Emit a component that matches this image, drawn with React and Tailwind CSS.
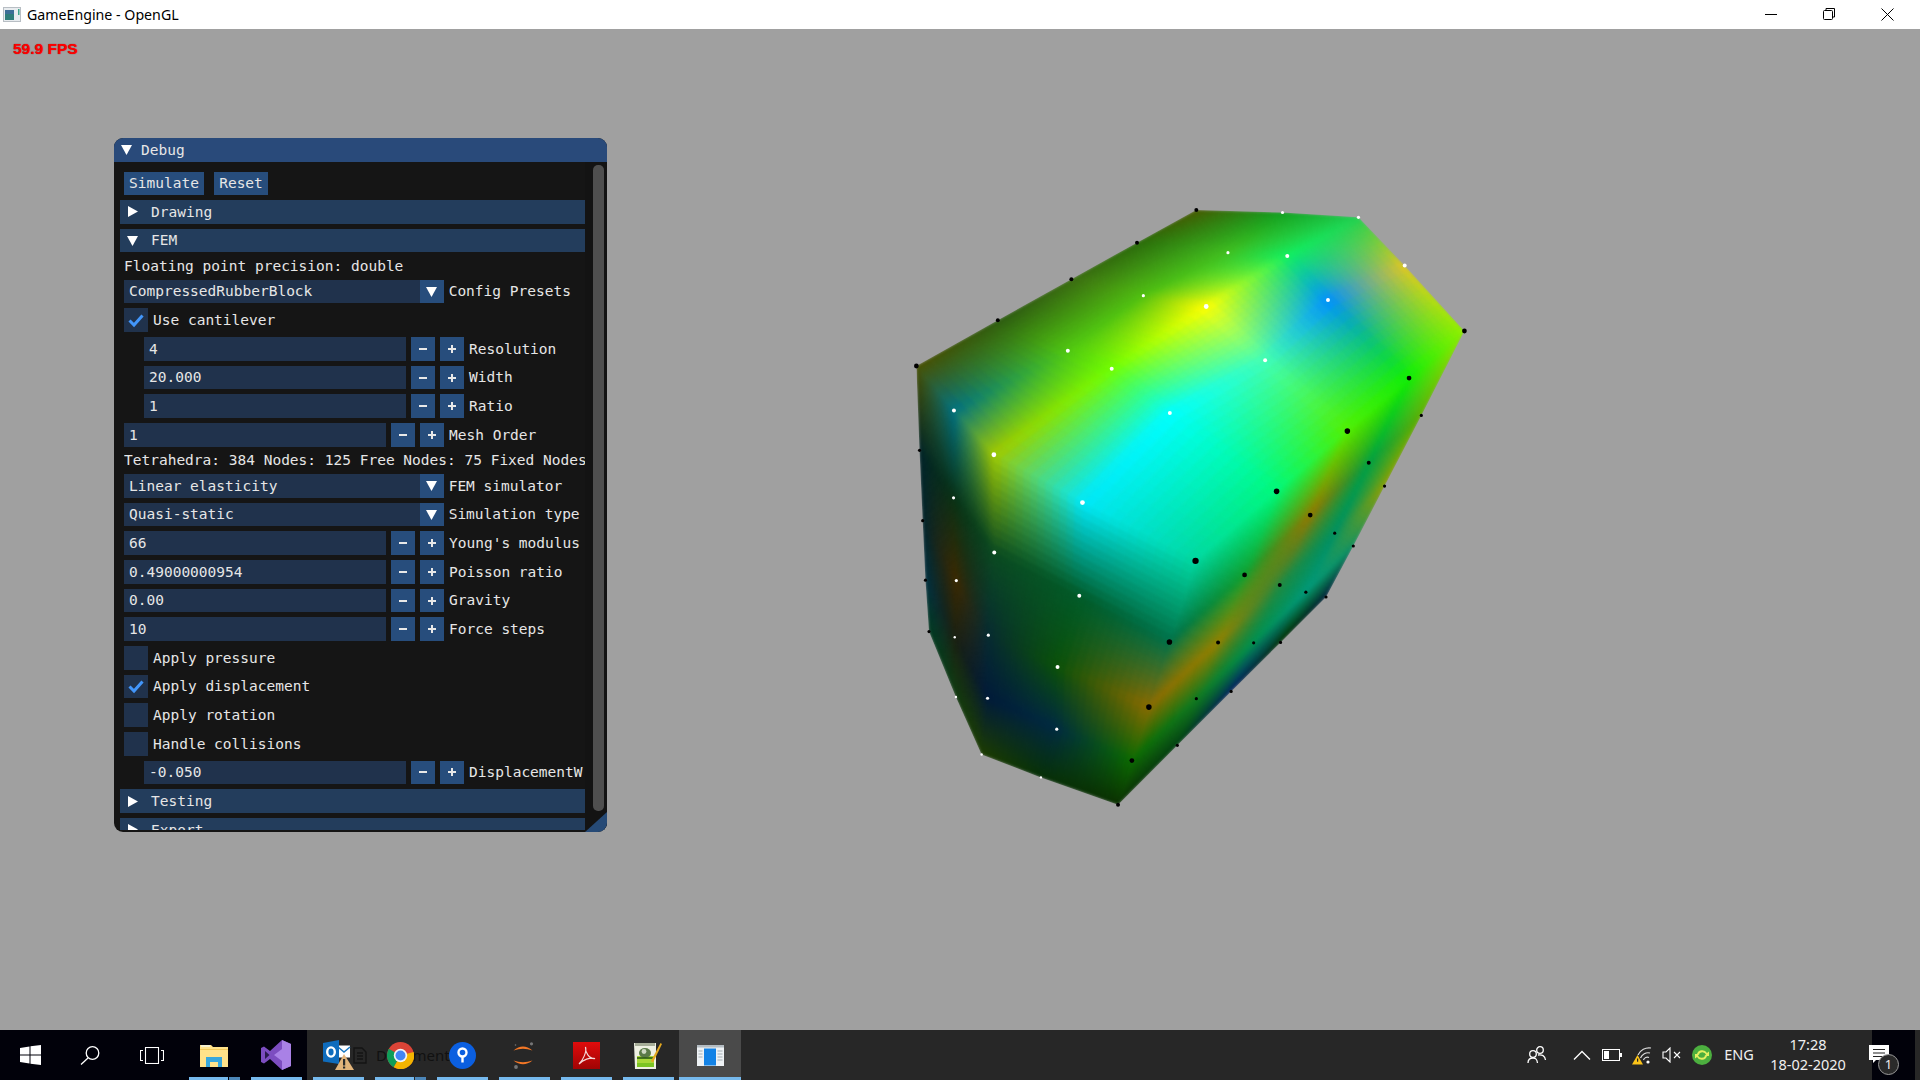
import React from 'react'

// --- 3D block: three faces, 5x5 nodes each, with vertex colours ---
const TOP_P = [
  [[800, 50], [1018, 56], [1210, 68], [1327, 188], [1478, 351]],
  [[650, 131], [880, 156], [1030, 164], [1133, 274], [1338, 468]],
  [[484, 222], [666, 263], [825, 290], [974, 424], [1182, 600]],
  [[298, 324], [475, 400], [586, 445], [733, 555], [1003, 750]],
  [[92, 438], [187, 549], [288, 659], [512, 778], [798, 923]],
]
const TOP_C = [
  ['#4a5a00', '#10a020', '#20d050', '#e0c820', '#90f000'],
  ['#2a6a08', '#40c020', '#10f060', '#0090ff', '#10f000'],
  ['#3a6a10', '#50c010', '#ffff00', '#40ffb8', '#50f000'],
  ['#2c5a10', '#50c810', '#70ff00', '#00ffff', '#00f878'],
  ['#4a5000', '#007080', '#a0c800', '#00e8f8', '#00d8a0'],
]
const LEFT_P = [
  [[92, 438], [100, 648], [108, 823], [115, 971], [124, 1099]],
  [[187, 549], [186, 766], [193, 972], [189, 1113], [192, 1262]],
  [[288, 659], [289, 902], [274, 1108], [272, 1265], [257, 1405]],
  [[512, 778], [504, 1010], [449, 1187], [447, 1342], [407, 1462]],
  [[798, 923], [732, 1125], [680, 1287], [637, 1420], [602, 1530]],
]
const LEFT_C = [
  ['#4a5000', '#002428', '#00242c', '#003040', '#003a20'],
  ['#007080', '#083014', '#3a2800', '#1a2010', '#103a10'],
  ['#a0c800', '#0a4a20', '#062a30', '#001a38', '#1c3c00'],
  ['#00e8f8', '#005a28', '#0a5008', '#002a40', '#063006'],
  ['#00d8a0', '#007048', '#8a6a00', '#0a6a00', '#0a3000'],
]
const RIGHT_P = [
  [[1478, 351], [1369, 561], [1276, 737], [1197, 886], [1128, 1013]],
  [[1338, 468], [1236, 679], [1150, 854], [1077, 1001], [1013, 1126]],
  [[1182, 600], [1088, 809], [1011, 983], [945, 1127], [888, 1248]],
  [[1003, 750], [922, 958], [855, 1126], [800, 1266], [752, 1382]],
  [[798, 923], [732, 1125], [680, 1287], [637, 1420], [602, 1530]],
]
const RIGHT_C = [
  ['#90f000', '#60b000', '#90a000', '#109060', '#002040'],
  ['#10f000', '#00a040', '#009060', '#009878', '#003000'],
  ['#50f000', '#907800', '#208a40', '#00904f', '#002060'],
  ['#00f878', '#10a030', '#908000', '#107a20', '#004010'],
  ['#00d8a0', '#007048', '#8a6a00', '#0a6a00', '#0a3000'],
]
const OUTLINE = '92,438 298,324 484,222 650,131 800,50 1018,56 1210,68 1327,188 1478,351 1369,561 1276,737 1197,886 1128,1013 1013,1126 888,1248 752,1382 602,1530 407,1462 257,1405 192,1262 124,1099 115,971 108,823 100,648'

const WHITE_DOTS = [
  [1018, 56, 4], [1210, 68, 4], [1327, 188, 5], [880, 156, 4], [1030, 164, 5], [1133, 274, 5], [666, 263, 4], [825, 290, 6], [974, 424, 5],
  [475, 400, 5], [586, 445, 5], [733, 555, 5], [187, 549, 5], [288, 659, 6], [512, 778, 6], [186, 766, 4], [193, 972, 4], [189, 1113, 3],
  [192, 1262, 3], [289, 902, 5], [274, 1108, 4], [272, 1265, 4], [257, 1405, 3], [504, 1010, 5], [449, 1187, 5], [447, 1342, 4], [407, 1462, 3],
]
const BLACK_DOTS = [
  [800, 50, 5], [650, 131, 5], [484, 222, 5], [298, 324, 5], [92, 438, 6], [100, 648, 4], [108, 823, 4], [115, 971, 4], [124, 1099, 4],
  [1478, 351, 6], [1338, 468, 6], [1182, 600, 7], [1003, 750, 7], [798, 923, 8], [1369, 561, 4], [1276, 737, 4], [1197, 886, 4], [1128, 1013, 4],
  [1236, 679, 5], [1150, 854, 4], [1077, 1001, 4], [1013, 1126, 4], [1088, 809, 6], [1011, 983, 5], [945, 1127, 4], [888, 1248, 4],
  [922, 958, 6], [855, 1126, 5], [800, 1266, 4], [752, 1382, 4], [732, 1125, 7], [680, 1287, 7], [637, 1420, 6], [602, 1530, 5],
]

const hex = (s) => [parseInt(s.slice(1, 3), 16), parseInt(s.slice(3, 5), 16), parseInt(s.slice(5, 7), 16)]

function bilinear(grid, r, c, u, v) {
  const a = grid[r][c], b = grid[r][c + 1], d = grid[r + 1][c], e = grid[r + 1][c + 1]
  return a.map((_, i) => a[i] * (1 - u) * (1 - v) + b[i] * (1 - u) * v + d[i] * u * (1 - v) + e[i] * u * v)
}

function buildFace(points, colours, n) {
  const cols = colours.map((row) => row.map(hex))
  const out = []
  for (let r = 0; r < 4; r++) {
    for (let c = 0; c < 4; c++) {
      for (let i = 0; i < n; i++) {
        for (let j = 0; j < n; j++) {
          const corners = [[i, j], [i, j + 1], [i + 1, j + 1], [i + 1, j]].map(([a, b]) => bilinear(points, r, c, a / n, b / n))
          const col = bilinear(cols, r, c, (i + 0.5) / n, (j + 0.5) / n).map(Math.round)
          out.push({ pts: corners.map((p) => `${p[0].toFixed(1)},${p[1].toFixed(1)}`).join(' '), fill: `rgb(${col.join(',')})` })
        }
      }
    }
  }
  return out
}

const MESH = [...buildFace(LEFT_P, LEFT_C, 12), ...buildFace(RIGHT_P, RIGHT_C, 12), ...buildFace(TOP_P, TOP_C, 12)]

function Block() {
  return (
    <svg className="absolute left-[880px] top-[161px]" width="620" height="630" viewBox="0 0 1568 1568" preserveAspectRatio="none">
      <defs>
        <clipPath id="blockClip"><polygon points={OUTLINE} /></clipPath>
        <filter id="soft" x="-5%" y="-5%" width="110%" height="110%" colorInterpolationFilters="sRGB"><feGaussianBlur stdDeviation="4" /></filter>
      </defs>
      <g clipPath="url(#blockClip)">
        <g filter="url(#soft)">
          {MESH.map((m, i) => <polygon key={i} points={m.pts} fill={m.fill} stroke={m.fill} strokeWidth="2" />)}
        </g>
      </g>
      {WHITE_DOTS.map(([x, y, r], i) => <circle key={i} cx={x} cy={y} r={r} fill="#fff" />)}
      {BLACK_DOTS.map(([x, y, r], i) => <circle key={i} cx={x} cy={y} r={r} fill="#000" />)}
    </svg>
  )
}

// --- ImGui widgets ---
const ROW = 'h-[23.67px] shrink-0'

function Arrow({ open, className = '' }) {
  return (
    <svg width="13" height="13" viewBox="0 0 13 13" className={className}>
      {open ? <path d="M1 2 H12 L6.5 12 Z" fill="#fff" /> : <path d="M2 1 L12 6.5 L2 12 Z" fill="#fff" />}
    </svg>
  )
}

function Header({ label, open }) {
  return (
    <div className={`${ROW} flex items-center bg-[#233d5c]`}>
      <Arrow open={open} className="ml-[6px] mr-[12px]" />
      <span>{label}</span>
    </div>
  )
}

function TextRow({ children }) {
  return <div className="h-[17.33px] shrink-0 flex items-center ml-[4px] whitespace-nowrap overflow-hidden">{children}</div>
}

function Combo({ value, label }) {
  return (
    <div className={`${ROW} flex items-center ml-[4px]`}>
      <div className="w-[295.67px] h-full flex items-center pl-[5px] bg-[#20324c]">{value}</div>
      <div className="w-[24px] h-full flex items-center justify-center bg-[#274d7c]"><Arrow open /></div>
      <span className="ml-[5px]">{label}</span>
    </div>
  )
}

function Stepper({ value, label, indent }) {
  return (
    <div className={`${ROW} flex items-center whitespace-nowrap ${indent ? 'ml-[24px]' : 'ml-[4px]'}`}>
      <div className="w-[262px] h-full flex items-center pl-[5px] bg-[#20324c]">{value}</div>
      <div className="w-[24px] h-full ml-[5px] flex items-center justify-center bg-[#274d7c]">
        <div className="w-[8px] h-[2px] bg-[#e8e8e8]" />
      </div>
      <div className="w-[24px] h-full ml-[5px] flex items-center justify-center bg-[#274d7c] relative">
        <div className="w-[8px] h-[2px] bg-[#e8e8e8]" />
        <div className="absolute w-[2px] h-[8px] bg-[#e8e8e8]" />
      </div>
      <span className="ml-[5px]">{label}</span>
    </div>
  )
}

function Check({ label, checked }) {
  return (
    <div className={`${ROW} flex items-center ml-[4px]`}>
      <div className="w-[24px] h-full flex items-center justify-center bg-[#20324c]">
        {checked && (
          <svg width="18" height="18" viewBox="0 0 18 18"><path d="M2.5 9.5 L7 14 L15.5 4.5" fill="none" stroke="#4296fa" strokeWidth="3" /></svg>
        )}
      </div>
      <span className="ml-[5px]">{label}</span>
    </div>
  )
}

function DebugPanel() {
  return (
    <div className="absolute left-[114px] top-[109px] w-[493px] h-[694px] flex flex-col rounded-[9px] overflow-hidden bg-[#151515] text-[#e6e6e6] font-['DejaVu_Sans_Mono',monospace] text-[14.5px] leading-none">
      <div className="h-[23.5px] shrink-0 flex items-center bg-[#294a7a]">
        <Arrow open className="ml-[6px] mr-[8px]" />
        <span>Debug</span>
      </div>
      <div className="flex-1 min-h-0 flex pb-[2px]">
        <div className="w-[471px] pl-[6px] pt-[10px] flex flex-col gap-[5px] overflow-hidden">
          <div className={`${ROW} flex ml-[4px] gap-[10px]`}>
            <div className="w-[80px] flex items-center justify-center bg-[#274d7c]">Simulate</div>
            <div className="w-[54px] flex items-center justify-center bg-[#274d7c]">Reset</div>
          </div>
          <Header label="Drawing" />
          <Header label="FEM" open />
          <TextRow>Floating point precision: double</TextRow>
          <Combo value="CompressedRubberBlock" label="Config Presets" />
          <Check label="Use cantilever" checked />
          <Stepper indent value="4" label="Resolution" />
          <Stepper indent value="20.000" label="Width" />
          <Stepper indent value="1" label="Ratio" />
          <Stepper value="1" label="Mesh Order" />
          <TextRow>Tetrahedra: 384 Nodes: 125 Free Nodes: 75 Fixed Nodes: 50</TextRow>
          <Combo value="Linear elasticity" label="FEM simulator" />
          <Combo value="Quasi-static" label="Simulation type" />
          <Stepper value="66" label="Young's modulus" />
          <Stepper value="0.49000000954" label="Poisson ratio" />
          <Stepper value="0.00" label="Gravity" />
          <Stepper value="10" label="Force steps" />
          <Check label="Apply pressure" />
          <Check label="Apply displacement" checked />
          <Check label="Apply rotation" />
          <Check label="Handle collisions" />
          <Stepper indent value="-0.050" label="DisplacementW" />
          <Header label="Testing" />
          <Header label="Export" />
        </div>
        <div className="w-[22px] pl-[8px] pr-[3px] pt-[3.5px] pb-[19px] bg-[#131313]">
          <div className="h-full rounded-[5px] bg-[#4f4f4f]" />
        </div>
      </div>
      <div className="absolute right-0 bottom-0 w-0 h-0 border-l-[22px] border-b-[20px] border-l-transparent border-b-[#264a76]" />
    </div>
  )
}

// --- Taskbar icons ---
const WindowsIcon = () => (
  <svg width="21" height="20" viewBox="0 0 21 20">
    <path d="M0 3 L9.5 1.5 V9.5 H0 Z M10.5 1.3 L21 0 V9.5 H10.5 Z M0 10.5 H9.5 V18.5 L0 17 Z M10.5 10.5 H21 V20 L10.5 18.7 Z" fill="#fff" />
  </svg>
)
const SearchIcon = () => (
  <svg width="20" height="19" viewBox="0 0 20 19" fill="none" stroke="#fff" strokeWidth="1.3">
    <circle cx="12.5" cy="7" r="6.3" /><path d="M8 12 L1 18.5" />
  </svg>
)
const TaskViewIcon = () => (
  <svg width="24" height="17" viewBox="0 0 24 17" fill="none" stroke="#fff" strokeWidth="1.1">
    <rect x="5.5" y="0.5" width="13" height="16" />
    <path d="M3 3.5 H0.5 V13.5 H3 M21 3.5 H23.5 V13.5 H21" />
  </svg>
)
const ExplorerIcon = () => (
  <svg width="28" height="23" viewBox="0 0 28 23">
    <path d="M0 1 H11 L13 3 H28 V23 H0 Z" fill="#ffe28a" />
    <path d="M1 1 H10 V3 H1 Z" fill="#f5f0d0" />
    <path d="M0 5 H28 V6 H0 Z" fill="#f2c85a" />
    <path d="M6 23 V13 H22 V23 H18 V18 H10 V23 Z" fill="#38a7dc" />
  </svg>
)
const VsIcon = () => (
  <svg width="30" height="30" viewBox="0 0 30 30">
    <path d="M21 0 L30 4 V26 L21 30 L9 19 L3 23.5 L0 22 V8 L3 6.5 L9 11 Z" fill="#7c4dc0" />
    <path d="M21 0 L30 4 V26 L21 30 Z M21 9 L13 15 L21 21 Z" fill="#a981e6" fillRule="evenodd" />
    <path d="M4 11 V19 L8.5 15 Z" fill="#2a1a4d" />
  </svg>
)
const OutlookIcon = () => (
  <svg width="31" height="30" viewBox="0 0 31 30">
    <rect x="15" y="5.5" width="12" height="12" fill="#fff" />
    <path d="M15 7 L21 12 L27 7" fill="none" stroke="#1a78c2" strokeWidth="1.5" />
    <path d="M0 3 L16 0 V24 L0 21.5 Z" fill="#0f6cbd" />
    <ellipse cx="8" cy="12" rx="3.8" ry="4.6" fill="none" stroke="#fff" strokeWidth="2.4" />
    <path d="M21 14 L31 30 H12 Z" fill="#e2b47a" />
    <rect x="20" y="19" width="2.2" height="6.5" fill="#2a2a2a" />
    <rect x="20" y="26.5" width="2.2" height="2" fill="#2a2a2a" />
  </svg>
)
const ChromeIcon = () => (
  <svg width="27" height="27" viewBox="-13.5 -13.5 27 27">
    <circle r="13.5" fill="#db4437" />
    <path d="M-11.7 -6.75 L0 0 L-6.75 11.7 A13.5 13.5 0 0 1 -11.7 -6.75 Z" fill="#0f9d58" />
    <path d="M13.1 -3.5 L0 0 L-6.75 11.7 A13.5 13.5 0 0 0 13.1 -3.5 Z" fill="#f4b400" />
    <circle r="6.7" fill="#f4f4f4" />
    <circle r="5" fill="#4285f4" />
  </svg>
)
const SourceTreeIcon = () => (
  <svg width="27" height="27" viewBox="0 0 27 27">
    <circle cx="13.5" cy="13.5" r="13.5" fill="#0b5fe0" />
    <circle cx="13.5" cy="10.5" r="4" fill="none" stroke="#fff" strokeWidth="2.4" />
    <rect x="12.3" y="14" width="2.4" height="6.5" fill="#fff" />
  </svg>
)
const JupyterIcon = () => (
  <svg width="22" height="27" viewBox="0 0 22 27">
    <path d="M0.5 8.5 Q10 0.5 19.5 8.5 Q10 5 0.5 8.5 Z" fill="#f37726" />
    <path d="M0.5 18.5 Q10 26 19.5 18.5 Q10 22 0.5 18.5 Z" fill="#f37726" />
    <circle cx="18.5" cy="1.8" r="1.6" fill="#767677" />
    <circle cx="3" cy="25" r="1.9" fill="#767677" />
    <circle cx="2.5" cy="3" r="0.8" fill="#767677" />
  </svg>
)
const AcrobatIcon = () => (
  <svg width="27" height="27" viewBox="0 0 27 27">
    <defs><linearGradient id="acro" x1="0" y1="0" x2="0" y2="1"><stop offset="0" stopColor="#e00c0c" /><stop offset="1" stopColor="#a00404" /></linearGradient></defs>
    <rect width="27" height="27" fill="url(#acro)" />
    <path d="M6 22 C10 18 14 10 12.5 5 C12 10 16 17 22 16.5 C17 15 10 18 6 22 Z" fill="none" stroke="#f5d8d8" strokeWidth="1.2" />
  </svg>
)
const NotepadIcon = () => (
  <svg width="28" height="27" viewBox="0 0 28 27">
    <path d="M0 1 H22 V27 H1 Z" fill="#eef0e2" />
    <rect x="1" y="1" width="20" height="3" fill="#a6ad98" />
    <path d="M3 21 H20 V25 H3 Z" fill="#7cc423" />
    <path d="M3 14 H20 V21 H3 Z" fill="#a8d838" />
    <ellipse cx="11" cy="11" rx="6" ry="5" fill="#5a7a48" />
    <circle cx="10" cy="9.5" r="2.4" fill="#cfd8c4" />
    <path d="M3 16 H19" stroke="#2a5a14" strokeWidth="1.6" />
    <path d="M17 19 L26.5 1 L28 2 L19 20.5 Z" fill="#e3a81f" />
  </svg>
)
const ActiveIcon = () => (
  <svg width="27" height="21" viewBox="0 0 27 21">
    <rect width="27" height="21" fill="#eef2f5" />
    <rect width="27" height="2.5" fill="#b4bcc2" />
    <rect x="7" y="3.5" width="12" height="17" fill="#1282e6" />
    <path d="M1.5 6 H5.5 M1.5 9 H5.5 M1.5 12 H5.5 M20.5 6 H25.5 M20.5 9 H25.5 M20.5 12 H25.5 M20.5 15 H25.5" stroke="#a3adb3" strokeWidth="1.2" />
  </svg>
)

function TaskBtn({ children, active, split }) {
  return (
    <div className={`relative w-[62px] h-full flex items-center justify-center ${active ? 'bg-[#4a4a4a]' : ''}`}>
      {children}
      {active && <div className="absolute left-0 right-0 bottom-0 h-[3px] bg-[#76b9ed]" />}
      {!active && (
        <div className="absolute left-[6px] w-[51px] bottom-0 h-[3px] flex">
          <div className="flex-1 bg-[#76b9ed]" />
          {split && <div className="w-[11px] ml-px bg-[#4c86b8]" />}
        </div>
      )}
    </div>
  )
}

function Taskbar() {
  return (
    <div className="relative h-[50px] shrink-0 flex bg-[#272727] text-[#f0f0f0] font-['Noto_Sans',sans-serif]">
      <div className="flex h-full bg-[#01010a]">
        <div className="w-[60px] flex items-center justify-center"><WindowsIcon /></div>
        <div className="w-[60px] flex items-center justify-center"><SearchIcon /></div>
        <div className="w-[63px] flex items-center justify-center"><TaskViewIcon /></div>
        <TaskBtn split><ExplorerIcon /></TaskBtn>
        <TaskBtn><VsIcon /></TaskBtn>
      </div>
      {/* thumbnail ghost behind the icons */}
      <svg className="absolute left-[352px] top-[17px]" width="16" height="17" viewBox="0 0 16 17" fill="none" stroke="#141414" strokeWidth="1.4">
        <path d="M2 1 H10 L14 5 V16 H2 Z M5 6 H11 M5 9 H11 M5 12 H11" />
      </svg>
      <div className="absolute left-[376px] top-[14px] text-[15px] text-[#111] whitespace-nowrap">Documents</div>
      <div className="relative flex h-full">
        <TaskBtn><OutlookIcon /></TaskBtn>
        <TaskBtn split><ChromeIcon /></TaskBtn>
        <TaskBtn><SourceTreeIcon /></TaskBtn>
        <TaskBtn><JupyterIcon /></TaskBtn>
        <TaskBtn><AcrobatIcon /></TaskBtn>
        <TaskBtn><NotepadIcon /></TaskBtn>
        <TaskBtn active><ActiveIcon /></TaskBtn>
      </div>
      <div className="flex-1" />
      <div className="flex h-full items-center">
        <div className="w-[30px] flex justify-center">
          <svg width="20" height="20" viewBox="0 0 20 20" fill="none" stroke="#fff" strokeWidth="1.3">
            <circle cx="13" cy="5" r="3.3" /><circle cx="6" cy="9" r="3.3" />
            <path d="M1 18 C1 14 3 13 6 13 C9 13 10 14 10.5 18 M11 10 C15 9.5 18 10.5 18.5 15" />
          </svg>
        </div>
        <div className="w-[15px]" />
        <div className="w-[30px] flex justify-center">
          <svg width="18" height="10" viewBox="0 0 18 10" fill="none" stroke="#fff" strokeWidth="1.3"><path d="M1 9.5 L9 1.5 L17 9.5" /></svg>
        </div>
        <div className="w-[30px] flex justify-center">
          <svg width="20" height="12" viewBox="0 0 20 12">
            <rect x="0.5" y="0.5" width="17" height="11" fill="none" stroke="#fff" />
            <rect x="2" y="2" width="5" height="8" fill="#fff" />
            <rect x="18" y="4" width="2" height="4" fill="#fff" />
          </svg>
        </div>
        <div className="w-[30px] flex justify-center">
          <svg width="20" height="20" viewBox="0 0 20 20" fill="none">
            <path d="M6 10 A12 12 0 0 1 19 3 M8.5 13 A8 8 0 0 1 18 8 M11.5 15 A4 4 0 0 1 17 12.5" stroke="#ddd" strokeWidth="1.2" />
            <circle cx="16" cy="17" r="1.6" fill="#fff" />
            <path d="M5.5 10 L11 19.5 H0 Z" fill="#fcc419" />
            <rect x="5" y="13.5" width="1.2" height="3.2" fill="#222" />
          </svg>
        </div>
        <div className="w-[30px] flex justify-center">
          <svg width="20" height="16" viewBox="0 0 20 16" fill="none" stroke="#fff" strokeWidth="1.1">
            <path d="M1 5 H4 L8 1 V15 L4 11 H1 Z" /><path d="M12 5 L18 11 M18 5 L12 11" />
          </svg>
        </div>
        <div className="w-[30px] flex justify-center">
          <svg width="20" height="20" viewBox="0 0 20 20">
            <circle cx="10" cy="10" r="10" fill="#4caf3f" />
            <path d="M5 9 A5.5 5.5 0 0 1 15 8 L17 6.5 V11 H12.5 L14 9.5 A4 4 0 0 0 7 9 Z M15 11 A5.5 5.5 0 0 1 5 12 L3 13.5 V9 H7.5 L6 10.5 A4 4 0 0 0 13 11 Z" fill="#e4f060" />
          </svg>
        </div>
        <div className="w-[44px] text-center text-[14.5px]">ENG</div>
        <div className="w-[94px] flex flex-col items-center text-[14.5px] leading-[20px] mb-[3px]">
          <span>17:28</span>
          <span>18-02-2020</span>
        </div>
        <div className="w-[17px]" />
        <div className="relative w-[43px] h-full bg-[#01010a]">
          <svg width="20" height="18" viewBox="0 0 20 18" className="absolute left-[-3px] top-[15px]">
            <path d="M0 0 H20 V15 H7 L4 18 V15 H0 Z" fill="#fff" />
            <path d="M4 4.5 H16 M4 8 H16 M4 11.5 H16" stroke="#222" strokeWidth="1.1" />
          </svg>
          <div className="absolute left-[6px] top-[24px] w-[21px] h-[21px] rounded-full border border-[#9a9a9a] bg-[#2a2a2a] flex items-center justify-center text-[13px] leading-none">1</div>
        </div>
        <div className="w-[5px]" />
      </div>
    </div>
  )
}

export default function App() {
  return (
    <div className="w-[1920px] h-[1080px] flex flex-col overflow-hidden bg-[#a0a0a0]">
      {/* Title bar */}
      <div className="h-[29px] shrink-0 flex items-center bg-white text-black font-['Noto_Sans',sans-serif] text-[14.2px]">
        <svg width="18" height="15" viewBox="0 0 18 15" className="ml-[3px] mr-[6px]">
          <rect width="18" height="15" fill="#b8bec4" />
          <rect x="1" y="1" width="16" height="13" fill="#e8ecef" />
          <rect x="2" y="3" width="9" height="10" fill="#2f7d7a" />
          <rect x="2" y="3" width="9" height="4" fill="#3d6e96" />
          <rect x="15" y="2" width="1.5" height="6" fill="#3fa68c" />
        </svg>
        <span>GameEngine - OpenGL</span>
        <div className="flex-1" />
        <div className="flex pr-[4px]">
          <div className="w-[58px] flex justify-center">
            <svg width="12" height="12" viewBox="0 0 12 12"><path d="M0 6.5 H12" stroke="#000" /></svg>
          </div>
          <div className="w-[58px] flex justify-center">
            <svg width="12" height="12" viewBox="0 0 12 12" fill="none" stroke="#000"><rect x="0.5" y="2.5" width="9" height="9" rx="1" /><path d="M3 2.5 V0.5 H11.5 V9 H9.5" /></svg>
          </div>
          <div className="w-[58px] flex justify-center">
            <svg width="13" height="13" viewBox="0 0 13 13" stroke="#000"><path d="M0.5 0.5 L12.5 12.5 M12.5 0.5 L0.5 12.5" /></svg>
          </div>
        </div>
      </div>

      {/* GL viewport */}
      <div className="relative flex-1 min-h-0">
        <div className="pl-[13px] pt-[10px] text-[15.5px] leading-[19px] font-bold text-[#ff0000] font-['Liberation_Sans',sans-serif] [text-shadow:0_0_1px_#900000]">59.9 FPS</div>
        <DebugPanel />
        <Block />
      </div>

      <Taskbar />
    </div>
  )
}
